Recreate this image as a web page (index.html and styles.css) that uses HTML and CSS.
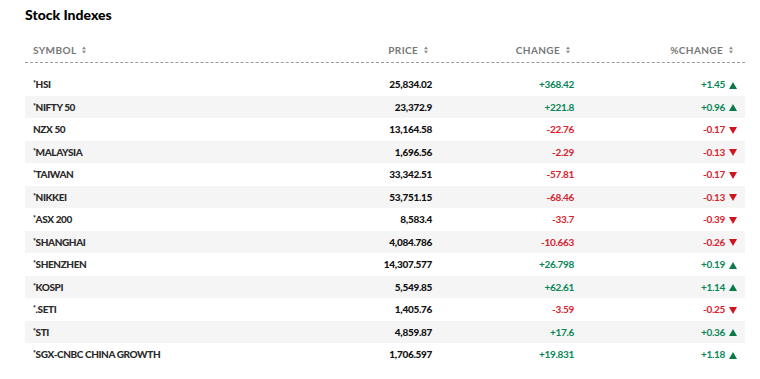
FILE: index.html
```html
<!DOCTYPE html>
<html lang="en">
<head>
    <meta charset="UTF-8">
    <meta name="viewport" content="width=device-width, initial-scale=1.0">
    <title>Stock Indexes</title>
    <link rel="stylesheet" href="styles.css">
</head>
<body>
    <div class="container">
        <h2 class="title">Stock Indexes</h2>
        <div class="quotes">
            <div class="head">
                <div class="th">SYMBOL <svg class="sort" viewBox="0 0 5 9"><path d="M2.5 0L5 3.5H0z M2.5 9L5 5.5H0z"/></svg></div>
                <div class="th num">PRICE <svg class="sort" viewBox="0 0 5 9"><path d="M2.5 0L5 3.5H0z M2.5 9L5 5.5H0z"/></svg></div>
                <div class="th num">CHANGE <svg class="sort" viewBox="0 0 5 9"><path d="M2.5 0L5 3.5H0z M2.5 9L5 5.5H0z"/></svg></div>
                <div class="th num">%CHANGE <svg class="sort" viewBox="0 0 5 9"><path d="M2.5 0L5 3.5H0z M2.5 9L5 5.5H0z"/></svg></div>
            </div>
            <div class="body" id="rows"></div>
        </div>
    </div>

    <script>
        // symbol, price, change, %change, delayed
        const quotes = [
            ['HSI', '25,834.02', '+368.42', '+1.45', true],
            ['NIFTY 50', '23,372.9', '+221.8', '+0.96', true],
            ['NZX 50', '13,164.58', '-22.76', '-0.17', false],
            ['MALAYSIA', '1,696.56', '-2.29', '-0.13', true],
            ['TAIWAN', '33,342.51', '-57.81', '-0.17', true],
            ['NIKKEI', '53,751.15', '-68.46', '-0.13', true],
            ['ASX 200', '8,583.4', '-33.7', '-0.39', true],
            ['SHANGHAI', '4,084.786', '-10.663', '-0.26', true],
            ['SHENZHEN', '14,307.577', '+26.798', '+0.19', true],
            ['KOSPI', '5,549.85', '+62.61', '+1.14', true],
            ['.SETI', '1,405.76', '-3.59', '-0.25', true],
            ['STI', '4,859.87', '+17.6', '+0.36', true],
            ['SGX-CNBC CHINA GROWTH', '1,706.597', '+19.831', '+1.18', true]
        ];

        const upArrow = '<svg class="arrow" viewBox="0 0 8 7"><path d="M4 0L8 7H0z"/></svg>';
        const downArrow = '<svg class="arrow" viewBox="0 0 8 7"><path d="M0 0H8L4 7z"/></svg>';

        const rows = document.getElementById('rows');
        quotes.forEach(q => {
            const dir = q[2].startsWith('-') ? 'down' : 'up';
            const row = document.createElement('div');
            row.className = 'row';
            row.innerHTML =
                '<div class="td sym">' + (q[4] ? '<span class="star">*</span>' : '') + q[0] + '</div>' +
                '<div class="td num price">' + q[1] + '</div>' +
                '<div class="td num ' + dir + '">' + q[2] + '</div>' +
                '<div class="td num ' + dir + '">' + q[3] + (dir === 'up' ? upArrow : downArrow) + '</div>';
            rows.appendChild(row);
        });
    </script>
</body>
</html>
```

FILE: styles.css
```css
body {
    margin: 0;
    background-color: #fff;
    font-family: Lato, "Open Sans", sans-serif;
    color: #222;
}
.container {
    width: 720px;
    padding: 6px 25px 0;
}
.title {
    margin: 0;
    font-size: 14px;
    line-height: 18px;
    font-weight: 900;
    color: #000;
}
.quotes {
    margin-top: 14px;
}
.head,
.row {
    display: grid;
    grid-template-columns: 315px 100px 142px 163px;
}
.head {
    height: 24px;
    align-items: center;
    border-bottom: 1px dashed #9a9a9a;
    margin-bottom: 10px;
}
.th {
    padding: 0 8px;
    font-size: 10px;
    font-weight: 700;
    letter-spacing: 0.4px;
    color: #777;
}
.th.num {
    padding-right: 12px;
}
.sort {
    width: 4px;
    height: 8px;
    margin-left: 3px;
    fill: #8a8a8a;
}
.row {
    height: 22.5px;
    align-items: center;
}
.row:nth-child(even) {
    background-color: #f5f5f5;
}
.td {
    padding: 0 8px;
    font-size: 10px;
    font-weight: 700;
    letter-spacing: -0.3px;
}
.num {
    text-align: right;
}
.sym {
    font-weight: 900;
    letter-spacing: -0.4px;
    color: #2b2b2b;
}
.star {
    font-size: 7px;
    vertical-align: 2px;
}
.price {
    font-weight: 900;
    color: #111;
}
.up {
    color: #078556;
}
.down {
    color: #d8222d;
}
.arrow {
    width: 8px;
    height: 7px;
    margin-left: 4px;
    vertical-align: -0.5px;
}
.up .arrow {
    fill: #0b7a4a;
}
.down .arrow {
    fill: #d0141e;
}
```
